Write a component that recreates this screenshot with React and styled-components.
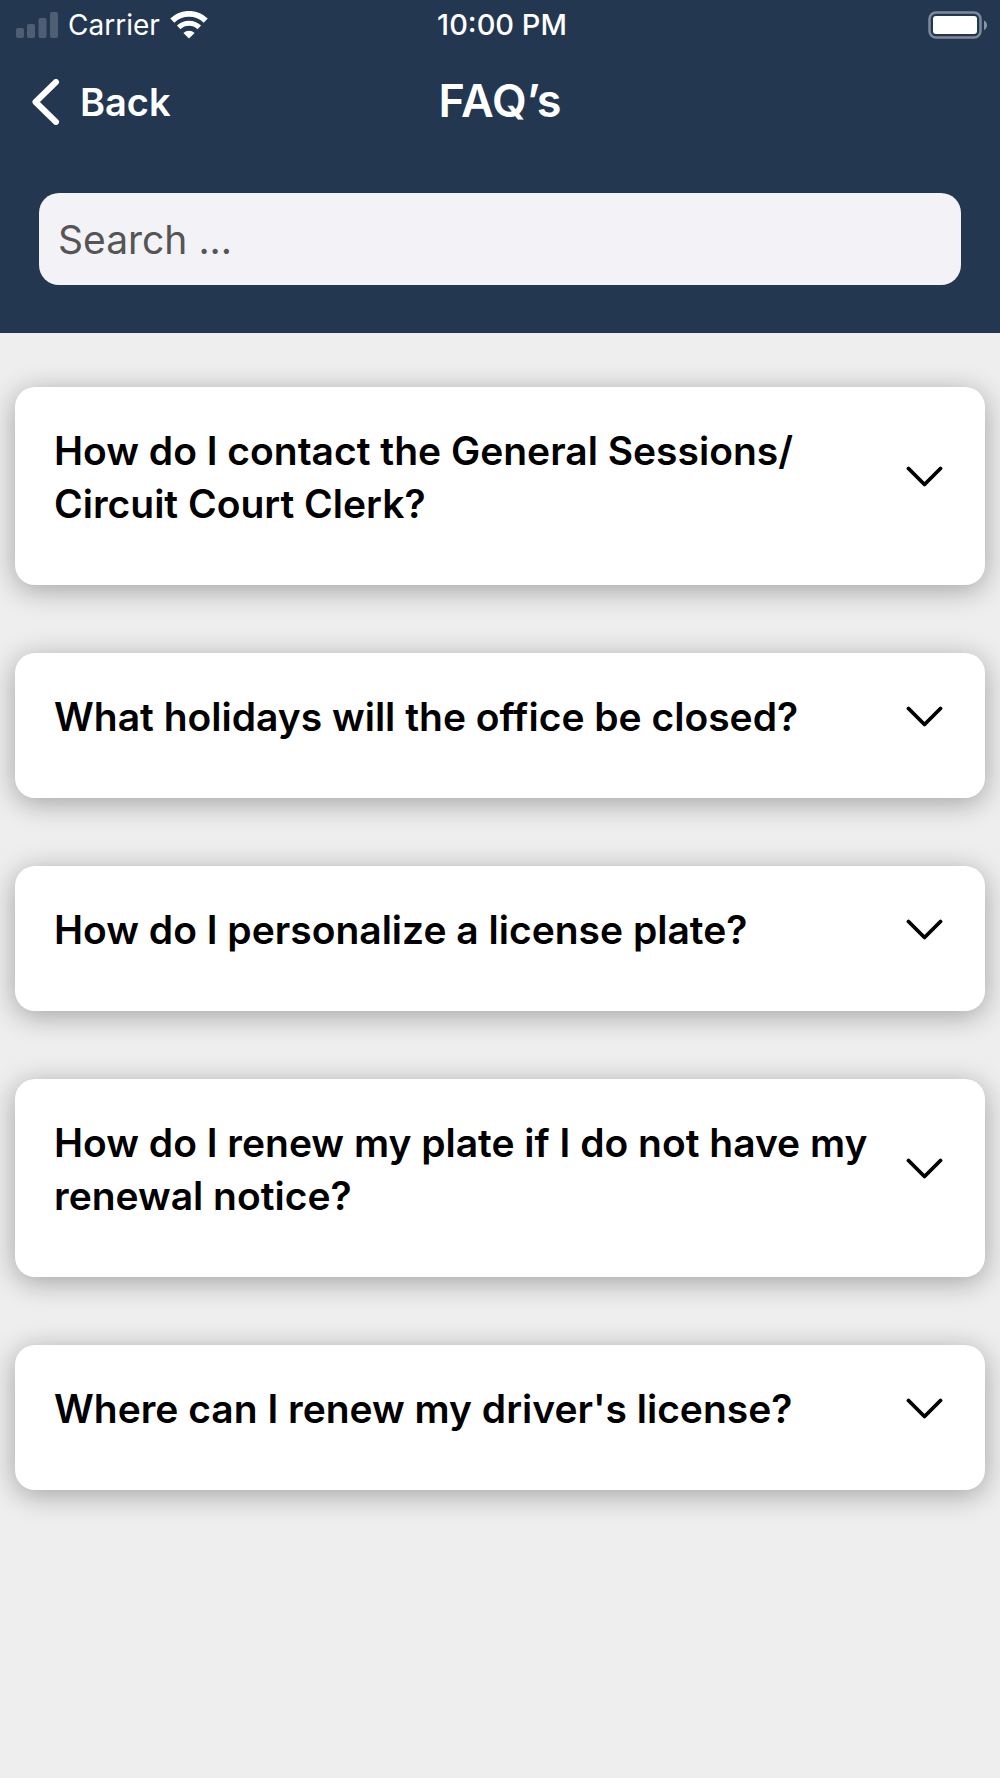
import React, { useState } from "react";
import styled, { createGlobalStyle } from "styled-components";

const GlobalStyle = createGlobalStyle`
  *, *::before, *::after { box-sizing: border-box; }
  body {
    margin: 0;
    background: #eee;
    color: #000;
    font-family: Inter, Roboto, "Liberation Sans", sans-serif;
  }
  button, input { font: inherit; }
`;

const Header = styled.header`
  background: #243751;
  color: #fff;
  padding-bottom: 48px;
`;

const Columns = styled.div`
  display: grid;
  grid-template-columns: 1fr auto 1fr;
  align-items: center;
`;

const StatusBar = styled(Columns)`
  padding: 8px 12px 0 16px;
  font-size: 28px;
  line-height: 34px;
`;

const Signal = styled.div`
  display: flex;
  align-items: center;
  gap: 10px;
`;

const Clock = styled.time`
  font-size: 29px;
  font-weight: 500;
`;

const Battery = styled.svg`
  justify-self: end;
`;

const NavBar = styled(Columns)`
  padding: 28px 32px 0;
  line-height: 60px;
`;

const BackButton = styled.button`
  display: flex;
  align-items: center;
  gap: 20px;
  justify-self: start;
  padding: 2px 0 0;
  border: 0;
  background: none;
  color: inherit;
  font-size: 38px;
  font-weight: 600;
  cursor: pointer;
`;

const Title = styled.h1`
  margin: 0;
  font-size: 45px;
  font-weight: 600;
`;

const SearchForm = styled.form`
  display: flex;
  padding: 61px 39px 0;
`;

const SearchInput = styled.input`
  flex: 1;
  min-width: 0;
  height: 92px;
  padding: 0 19px;
  border: 0;
  border-radius: 20px;
  background: #f2f2f7;
  color: #000;
  font-size: 39px;
  &::placeholder {
    color: #555;
    opacity: 1;
  }
`;

const List = styled.main`
  display: flex;
  flex-direction: column;
  gap: 68px;
  padding: 54px 15px 68px;
`;

const Card = styled.section`
  border-radius: 20px;
  background: #fff;
  box-shadow: 0 5px 28px rgba(0, 0, 0, 0.32);
`;

const Question = styled.h2`
  margin: 0;
  font-size: 39px;
  font-weight: 600;
  line-height: 53px;
`;

const Toggle = styled.button`
  display: flex;
  align-items: center;
  justify-content: space-between;
  gap: 20px;
  width: 100%;
  padding: 37px 42px 55px 39px;
  border: 0;
  background: none;
  color: inherit;
  text-align: left;
  cursor: pointer;
`;

const Chevron = styled.svg`
  flex: none;
  transform: ${({ $open }) => ($open ? "rotate(180deg)" : "none")};
`;

const Answer = styled.p`
  margin: 0;
  padding: 0 40px 40px;
  font-size: 28px;
  line-height: 34px;
`;

const faqs = [
  {
    question: ["How do I contact the General Sessions/", "Circuit Court Clerk?"],
    answer: "Call or visit the clerk's office during business hours.",
  },
  {
    question: ["What holidays will the office be closed?"],
    answer: "The office is closed on all county holidays.",
  },
  {
    question: ["How do I personalize a license plate?"],
    answer: "Submit a personalized plate application.",
  },
  {
    question: ["How do I renew my plate if I do not have my renewal notice?"],
    answer: "Bring your current registration to the office.",
  },
  {
    question: ["Where can I renew my driver's license?"],
    answer: "Visit a driver services center.",
  },
];

function SignalBars() {
  return (
    <svg width="42" height="26" viewBox="0 0 42 26" fill="#fff" fillOpacity="0.2" aria-hidden="true">
      <rect x="0" y="16" width="8" height="10" rx="2" />
      <rect x="11" y="12" width="8" height="14" rx="2" />
      <rect x="22.500" y="6" width="8" height="20" rx="2" />
      <rect x="34" y="0" width="8" height="26" rx="2" />
    </svg>
  );
}

function Wifi() {
  return (
    <svg width="38" height="28" viewBox="0 0 38 28" fill="none" stroke="#fff" aria-hidden="true">
      <path d="M2.300 9.600a24 24 0 0 1 33.400 0" strokeWidth="5.800" />
      <path d="M8.700 16.400a15 15 0 0 1 20.600 0" strokeWidth="5" />
      <path d="M19 27.500l-5.600-5.600a8.500 8.500 0 0 1 11.200 0z" fill="#fff" stroke="none" />
    </svg>
  );
}

function FaqItem({ question, answer }) {
  const [open, setOpen] = useState(false);
  return (
    <Card>
      <Question>
        <Toggle type="button" aria-expanded={open} onClick={() => setOpen(!open)}>
          <span>
            {question.map((line, i) => (
              <React.Fragment key={line}>
                {i > 0 && <br />}
                {line}
              </React.Fragment>
            ))}
          </span>
          <Chevron $open={open} width="37" height="22" viewBox="0 0 37 22" fill="none" stroke="#000" strokeWidth="3.800" strokeLinecap="round" strokeLinejoin="round" aria-hidden="true">
            <path d="M2.500 2.500l16 16 16-16" />
          </Chevron>
        </Toggle>
      </Question>
      {open && <Answer>{answer}</Answer>}
    </Card>
  );
}

export default function App() {
  const [query, setQuery] = useState("");
  const shown = faqs.filter(({ question }) =>
    question.join(" ").toLowerCase().includes(query.trim().toLowerCase())
  );

  return (
    <>
      <GlobalStyle />
      <Header>
        <StatusBar>
          <Signal>
            <SignalBars />
            <span>Carrier</span>
            <Wifi />
          </Signal>
          <Clock>10:00 PM</Clock>
          <Battery width="60" height="28" viewBox="0 0 60 28" fill="none" aria-hidden="true">
            <rect x="1.500" y="1.500" width="51" height="25" rx="6.500" stroke="#7f8a99" strokeWidth="2.500" />
            <rect x="5" y="5" width="44" height="18" rx="3" fill="#fff" />
            <path d="M56 9.500c4 1.500 4 8 0 9.500z" fill="#8a94a2" />
          </Battery>
        </StatusBar>
        <NavBar>
          <BackButton type="button">
            <svg width="28" height="46" viewBox="0 0 28 46" fill="none" stroke="#fff" strokeWidth="6" strokeLinecap="round" strokeLinejoin="round" aria-hidden="true">
              <path d="M24 3L3.500 23 24 43" />
            </svg>
            Back
          </BackButton>
          <Title>FAQ’s</Title>
        </NavBar>
        <SearchForm role="search" onSubmit={(e) => e.preventDefault()}>
          <SearchInput
            type="text"
            aria-label="Search"
            placeholder="Search ..."
            value={query}
            onChange={(e) => setQuery(e.target.value)}
          />
        </SearchForm>
      </Header>
      <List>
        {shown.map((faq) => (
          <FaqItem key={faq.question[0]} {...faq} />
        ))}
      </List>
    </>
  );
}
